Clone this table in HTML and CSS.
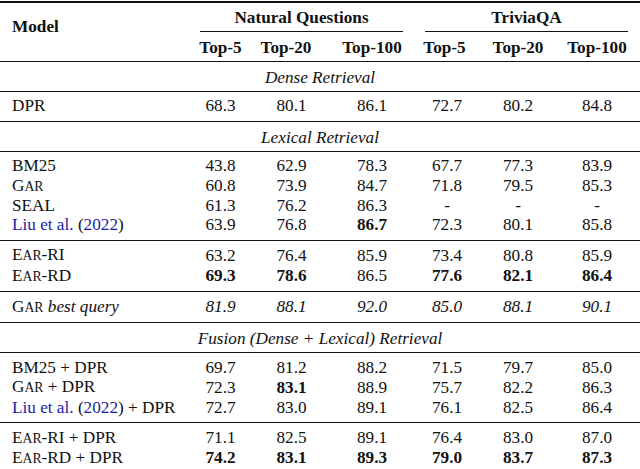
FILE: index.html
```html
<!DOCTYPE html>
<html lang="en">
<head>
<meta charset="utf-8">
<title>Retrieval results</title>
<link rel="stylesheet" href="styles.css">
</head>
<body>
<table class="results">
  <colgroup>
    <col class="c-model"><col class="c-nq5"><col class="c-nq20"><col class="c-nq100"><col class="c-t5"><col class="c-t20"><col class="c-t100">
  </colgroup>
  <thead>
    <tr class="hrow1">
      <th rowspan="2" class="model-h">Model</th>
      <th colspan="3" class="grp"><div class="grp-label grp-nq">Natural Questions</div></th>
      <th colspan="3" class="grp"><div class="grp-label grp-tqa">TriviaQA</div></th>
    </tr>
    <tr class="hrow2">
      <th>Top-5</th><th class="sh-nq20">Top-20</th><th>Top-100</th><th class="sh-t5">Top-5</th><th>Top-20</th><th class="last">Top-100</th>
    </tr>
  </thead>
  <tbody class="section"><tr><td colspan="7">Dense Retrieval</td></tr></tbody>
  <tbody class="group">
    <tr><td>DPR</td><td>68.3</td><td>80.1</td><td>86.1</td><td>72.7</td><td>80.2</td><td class="last">84.8</td></tr>
  </tbody>
  <tbody class="section"><tr><td colspan="7">Lexical Retrieval</td></tr></tbody>
  <tbody class="group">
    <tr><td>BM25</td><td>43.8</td><td>62.9</td><td>78.3</td><td>67.7</td><td>77.3</td><td class="last">83.9</td></tr>
    <tr><td>G<span class="sc">ar</span></td><td>60.8</td><td>73.9</td><td>84.7</td><td>71.8</td><td>79.5</td><td class="last">85.3</td></tr>
    <tr><td>SEAL</td><td>61.3</td><td>76.2</td><td>86.3</td><td>-</td><td>-</td><td class="last">-</td></tr>
    <tr><td><span class="cite">Liu et al.</span> (<span class="cite">2022</span>)</td><td>63.9</td><td>76.8</td><td><b>86.7</b></td><td>72.3</td><td>80.1</td><td class="last">85.8</td></tr>
  </tbody>
  <tbody class="group">
    <tr><td>E<span class="sc">ar</span>-RI</td><td>63.2</td><td>76.4</td><td>85.9</td><td>73.4</td><td>80.8</td><td class="last">85.9</td></tr>
    <tr><td>E<span class="sc">ar</span>-RD</td><td><b>69.3</b></td><td><b>78.6</b></td><td>86.5</td><td><b>77.6</b></td><td><b>82.1</b></td><td class="last"><b>86.4</b></td></tr>
  </tbody>
  <tbody class="group best">
    <tr><td>G<span class="sc">ar</span> <i>best query</i></td><td>81.9</td><td>88.1</td><td>92.0</td><td>85.0</td><td>88.1</td><td class="last">90.1</td></tr>
  </tbody>
  <tbody class="section"><tr><td colspan="7">Fusion (Dense + Lexical) Retrieval</td></tr></tbody>
  <tbody class="group">
    <tr><td>BM25 + DPR</td><td>69.7</td><td>81.2</td><td>88.2</td><td>71.5</td><td>79.7</td><td class="last">85.0</td></tr>
    <tr><td>G<span class="sc">ar</span> + DPR</td><td>72.3</td><td><b>83.1</b></td><td>88.9</td><td>75.7</td><td>82.2</td><td class="last">86.3</td></tr>
    <tr><td><span class="cite">Liu et al.</span> (<span class="cite">2022</span>) + DPR</td><td>72.7</td><td>83.0</td><td>89.1</td><td>76.1</td><td>82.5</td><td class="last">86.4</td></tr>
  </tbody>
  <tbody class="group final">
    <tr><td>E<span class="sc">ar</span>-RI + DPR</td><td>71.1</td><td>82.5</td><td>89.1</td><td>76.4</td><td>83.0</td><td class="last">87.0</td></tr>
    <tr><td>E<span class="sc">ar</span>-RD + DPR</td><td><b>74.2</b></td><td><b>83.1</b></td><td><b>89.3</b></td><td><b>79.0</b></td><td><b>83.7</b></td><td class="last"><b>87.3</b></td></tr>
  </tbody>
</table>
</body>
</html>
```

FILE: styles.css
```css
html, body {
  margin: 0;
  padding: 0;
  background: #fff;
}

body {
  font-family: "Liberation Serif", "Times New Roman", serif;
  font-size: 17.2px;
  line-height: 19.4px;
  color: #111;
}

.results {
  width: 640px;
  margin-top: 1px;
  table-layout: fixed;
  border-collapse: separate;
  border-spacing: 0;
}

.c-model { width: 185px; }
.c-nq5 { width: 71px; }
.c-nq20 { width: 71px; }
.c-nq100 { width: 90px; }
.c-t5 { width: 60px; }
.c-t20 { width: 82px; }
.c-t100 { width: 81px; }

.results th,
.results td {
  padding: 0;
  text-align: center;
  white-space: nowrap;
  font-weight: normal;
}

.results th,
.results b {
  font-weight: bold;
}

.results .last {
  padding-right: 5px;
}

/* header */
.hrow1 th {
  border-top: 2px solid #111;
  padding-top: 4.5px;
  vertical-align: top;
}

.model-h {
  text-align: left !important;
  padding-left: 12px !important;
  padding-top: 13.5px !important;
  border-bottom: 1px solid #111;
}

.grp-label {
  padding-bottom: 4px;
  border-bottom: 1px solid #111;
}

.grp-nq { margin: 0 14px 0 15px; }
.grp-tqa { margin: 0 12px 0 8px; }

.hrow2 th {
  padding-top: 5.6px;
  padding-bottom: 3.6px;
  border-bottom: 1px solid #111;
}

.hrow2 .sh-nq20 { padding-right: 11px; }
.hrow2 .sh-t5 { padding-right: 5px; }

/* section captions */
.section td {
  font-style: italic;
  padding-top: 6px;
  padding-bottom: 3.6px;
  border-bottom: 1px solid #111;
}

/* data groups */
.group td:first-child {
  text-align: left;
  padding-left: 12px;
}

.group tr:first-child td { padding-top: 4.6px; }
.group tr:last-child td {
  padding-bottom: 5px;
  border-bottom: 1px solid #111;
}

.group.final tr:last-child td {
  border-bottom: 2px solid #111;
}

.group.best td { font-style: italic; }
.group.best td:first-child { font-style: normal; }
.group.best td:first-child i { font-style: italic; }

.sc {
  text-transform: uppercase;
  font-size: 0.8em;
}

.cite {
  color: #1c1ca6;
}
```
